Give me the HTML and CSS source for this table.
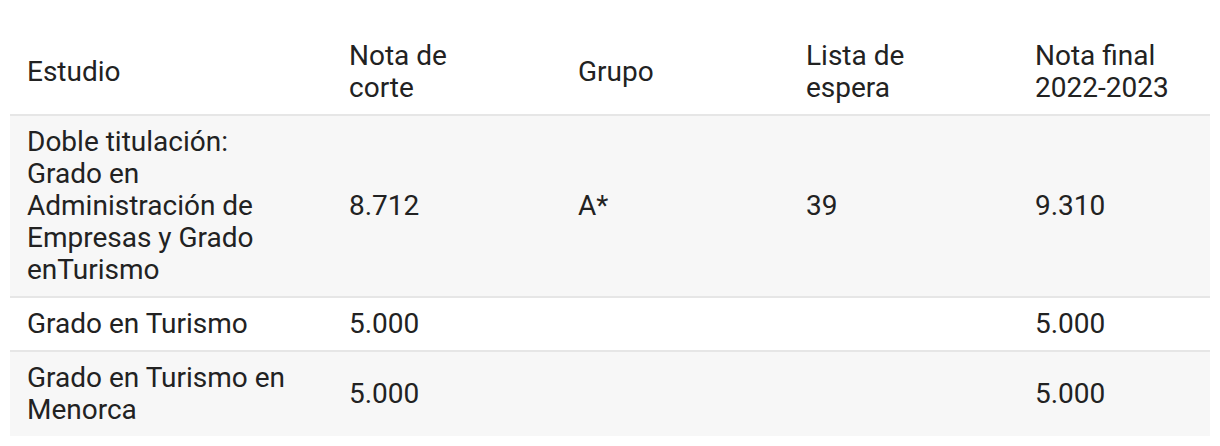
FILE: index.html
```html
<!DOCTYPE html>
<html lang="es">
<head>
<meta charset="utf-8">
<title>Notas de corte</title>
<link rel="stylesheet" href="styles.css">
</head>
<body>
<table class="grades">
  <colgroup>
    <col class="c-study">
    <col class="c-cut">
    <col class="c-group">
    <col class="c-wait">
    <col class="c-final">
  </colgroup>
  <thead>
    <tr>
      <th>Estudio</th>
      <th>Nota de corte</th>
      <th>Grupo</th>
      <th>Lista de espera</th>
      <th class="last">Nota final 2022-2023</th>
    </tr>
  </thead>
  <tbody>
    <tr>
      <td>Doble titulación: Grado en Administración de Empresas y Grado enTurismo</td>
      <td>8.712</td>
      <td>A*</td>
      <td>39</td>
      <td>9.310</td>
    </tr>
    <tr>
      <td>Grado en Turismo</td>
      <td>5.000</td>
      <td></td>
      <td></td>
      <td>5.000</td>
    </tr>
    <tr>
      <td>Grado en Turismo en Menorca</td>
      <td>5.000</td>
      <td></td>
      <td></td>
      <td>5.000</td>
    </tr>
  </tbody>
</table>
</body>
</html>
```
FILE: styles.css
```css
html, body {
  margin: 0;
  padding: 0;
  background: #ffffff;
}
body {
  padding: 30px 10px 0 10px;
  font-family: Roboto, "Liberation Sans", sans-serif;
  color: #222222;
}
.grades {
  width: 1200px;
  border-collapse: collapse;
  table-layout: fixed;
  font-size: 28px;
  line-height: 32px;
}
.c-study { width: 322px; }
.c-cut { width: 229px; }
.c-group { width: 228px; }
.c-wait { width: 229px; }
.c-final { width: 192px; }
.grades th,
.grades td {
  padding: 10px 38px 10px 17px;
  text-align: left;
  vertical-align: middle;
  font-weight: 400;
}
.grades th {
  padding-right: 60px;
}
.grades th.last {
  padding-right: 20px;
}
.grades thead tr {
  border-bottom: 2px solid #e6e6e6;
}
.grades tbody tr {
  border-top: 2px solid #e6e6e6;
}
.grades tbody tr:first-child {
  border-top: 0;
}
.grades tbody tr:nth-child(odd) {
  background: #f7f7f7;
}
```
